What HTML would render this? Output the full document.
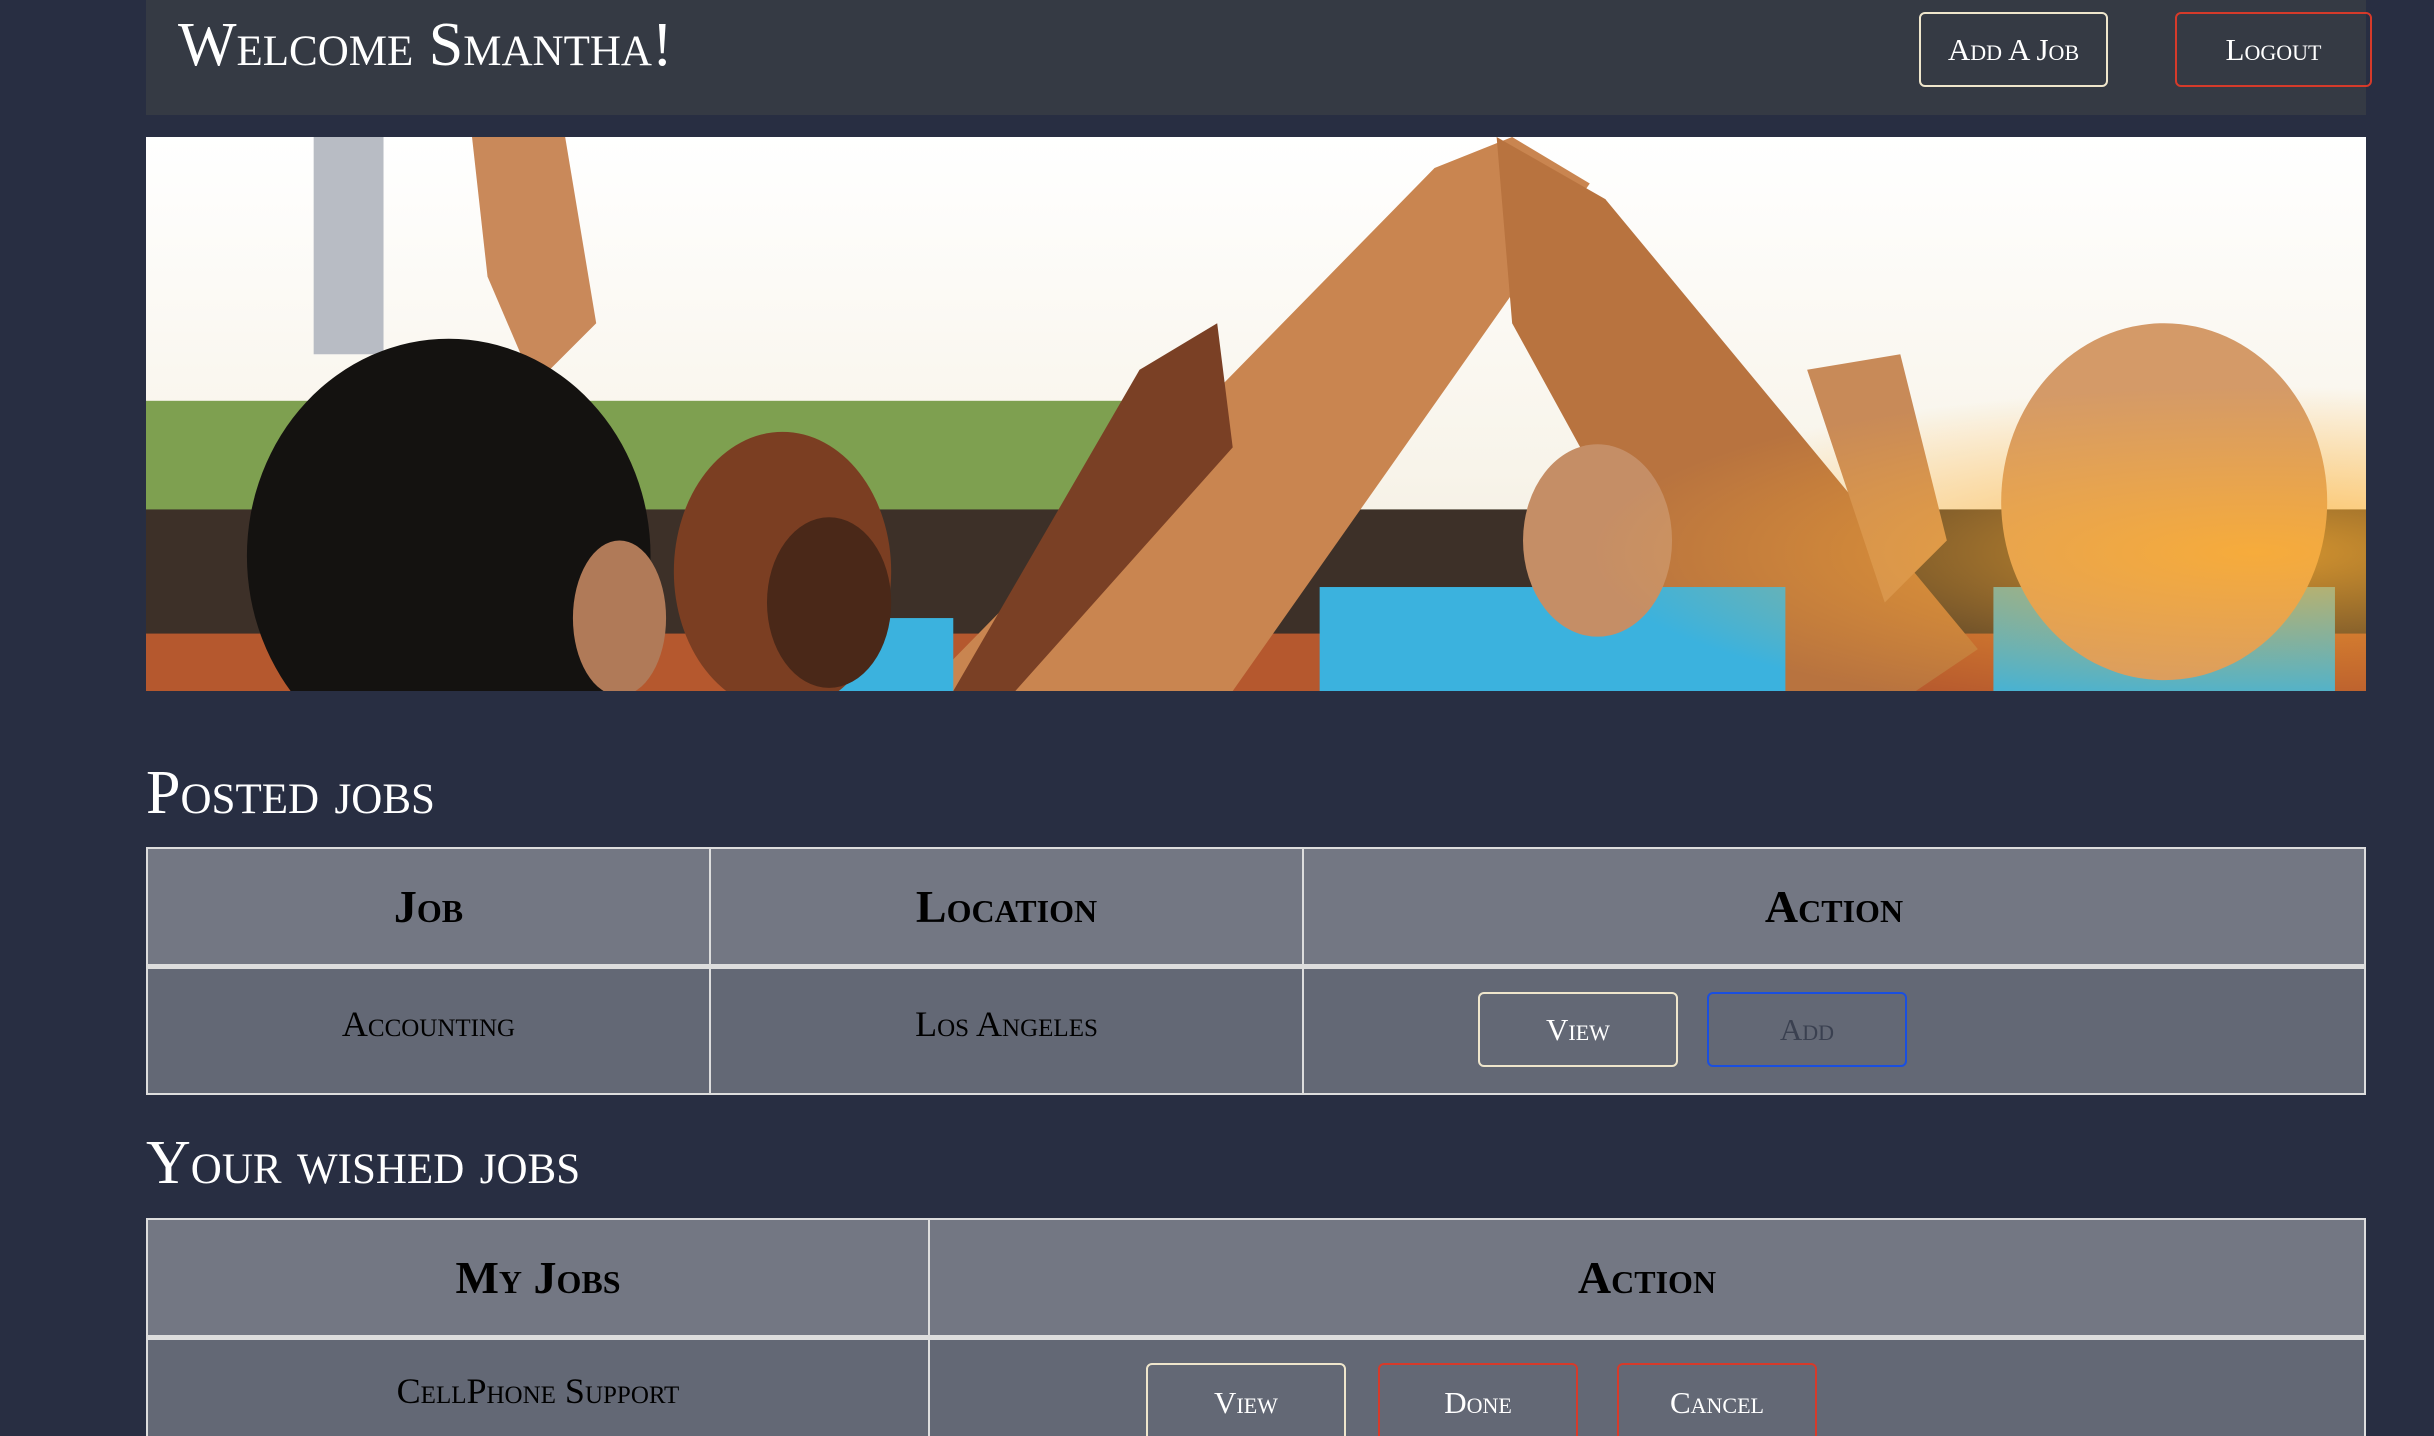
<!DOCTYPE html>
<html><head><meta charset="utf-8"><style>
*{margin:0;padding:0;box-sizing:border-box}
html,body{width:2434px;height:1436px;overflow:hidden}
body{background:#282e42;font-family:"Liberation Serif",serif;font-variant:small-caps;position:relative}
.hdr{position:absolute;left:146px;top:0;width:2220px;height:115px;background:#353a44}
.title{position:absolute;left:178px;top:2px;font-size:62px;color:#fff;line-height:86px}
.btn{position:absolute;border:2px solid #efe6cc;border-radius:6px;color:#fff;font-size:31px;text-align:center;display:flex;align-items:center;justify-content:center;background:transparent}
.img{position:absolute;left:146px;top:137px;width:2220px;height:554px}
h2{position:absolute;left:146px;font-size:62px;color:#fff;font-weight:normal;line-height:70px}
table{position:absolute;left:146px;width:2220px;border-collapse:collapse;border:2px solid #ddd}
td,th{border:2px solid #ddd;text-align:center;color:#000}
th{background:#737783;font-size:46px;height:118px}
td{background:#636875;font-size:36px;height:128px;padding-bottom:14px}
tr.h th{border-bottom:5px solid #ddd}
</style></head><body>
<div class="hdr"></div>
<div class="title">Welcome Smantha!</div>
<div class="btn" style="left:1919px;top:12px;width:189px;height:75px">Add A Job</div>
<div class="btn" style="left:2175px;top:12px;width:197px;height:75px;border-color:#d63a2a">Logout</div>
<svg class="img" viewBox="0 0 1430 357" preserveAspectRatio="none">
<defs>
<linearGradient id="sky" x1="0" y1="0" x2="0" y2="1"><stop offset="0" stop-color="#fff"/><stop offset="0.6" stop-color="#f8f4ea"/><stop offset="1" stop-color="#efe8d8"/></linearGradient>
<radialGradient id="sun" cx="0.95" cy="0.75" r="0.3"><stop offset="0" stop-color="#ffb030" stop-opacity="0.8"/><stop offset="1" stop-color="#ffb030" stop-opacity="0"/></radialGradient>
</defs>
<rect width="1430" height="357" fill="url(#sky)"/>
<rect x="108" y="0" width="45" height="140" fill="#b8bcc4"/>
<rect x="0" y="170" width="720" height="75" fill="#7ea050"/>
<rect x="780" y="240" width="650" height="30" fill="#8aa55a"/>
<rect x="0" y="240" width="1430" height="117" fill="#3d3028"/>
<rect x="0" y="320" width="1430" height="37" fill="#b5582e"/>
<polygon points="500,357 830,20 880,0 930,30 700,357" fill="#c98550"/>
<polygon points="870,0 940,40 1180,330 1140,357 1010,357 880,120" fill="#b8733f"/>
<polygon points="640,150 690,120 700,200 560,357 520,357" fill="#7a4025"/>
<polygon points="1070,150 1130,140 1160,260 1120,300" fill="#c88a58"/>
<polygon points="210,0 270,0 290,120 250,160 220,90" fill="#c9895a"/>
<rect x="756" y="290" width="300" height="67" fill="#3bb2de"/>
<rect x="1190" y="290" width="220" height="67" fill="#3bb2de"/>
<rect x="440" y="310" width="80" height="47" fill="#3bb2de"/>
<ellipse cx="935" cy="260" rx="48" ry="62" fill="#c58e66"/>
<ellipse cx="1300" cy="235" rx="105" ry="115" fill="#d49a68"/>
<ellipse cx="410" cy="280" rx="70" ry="90" fill="#7b3e22"/>
<ellipse cx="440" cy="300" rx="40" ry="55" fill="#4a2818"/>
<ellipse cx="195" cy="270" rx="130" ry="140" fill="#141210"/>
<ellipse cx="305" cy="310" rx="30" ry="50" fill="#b07a58"/>
<rect width="1430" height="357" fill="url(#sun)"/>
</svg>
<h2 style="top:758px">Posted jobs</h2>
<table style="top:847px"><tr class="h"><th style="width:563px">Job</th><th style="width:593px">Location</th><th>Action</th></tr>
<tr><td>Accounting</td><td>Los Angeles</td><td></td></tr></table>
<div class="btn" style="left:1478px;top:992px;width:200px;height:75px">View</div>
<div class="btn" style="left:1707px;top:992px;width:200px;height:75px;border-color:#1a4fe0;color:#3a4050">Add</div>
<h2 style="top:1128px">Your wished jobs</h2>
<table style="top:1218px"><tr class="h"><th style="width:782px">My Jobs</th><th>Action</th></tr>
<tr><td style="height:110px;vertical-align:top;padding:30px 0 0">CellPhone Support</td><td style="height:110px"></td></tr></table>
<div class="btn" style="left:1146px;top:1363px;width:200px;height:80px">View</div>
<div class="btn" style="left:1378px;top:1363px;width:200px;height:80px;border-color:#d63a2a">Done</div>
<div class="btn" style="left:1617px;top:1363px;width:200px;height:80px;border-color:#d63a2a">Cancel</div>
</body></html>
